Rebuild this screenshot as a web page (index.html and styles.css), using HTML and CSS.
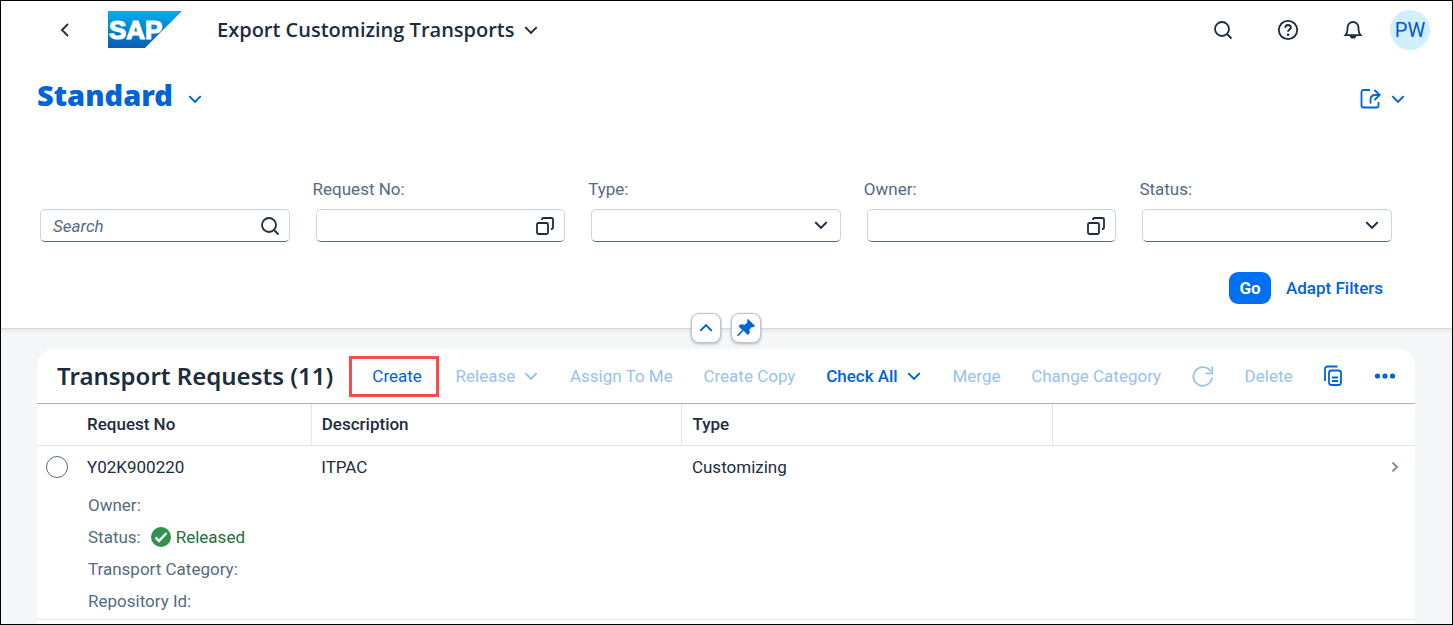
FILE: index.html
```html
<!DOCTYPE html>
<html lang="en">
<head>
<meta charset="utf-8">
<meta name="viewport" content="width=device-width, initial-scale=1">
<title>Export Customizing Transports</title>
<link rel="stylesheet" href="styles.css">
</head>
<body>
<svg width="0" height="0" class="defs" aria-hidden="true">
  <symbol id="down" viewBox="0 0 14 14"><path d="M2 4.500l5 5 5-5"/></symbol>
  <symbol id="search" viewBox="0 0 20 20"><circle cx="9" cy="9" r="7"/><path d="M14 14l4.500 4.500"/></symbol>
  <symbol id="valuehelp" viewBox="0 0 20 20"><rect x="2" y="7" width="11" height="11" rx="1.500"/><path d="M7 4V3.500A1.500 1.500 0 0 1 8.500 2H16.500A1.500 1.500 0 0 1 18 3.500V11.500A1.500 1.500 0 0 1 16.500 13H16"/></symbol>
</svg>

<header class="shell">
  <button class="icon-btn back" aria-label="Back"><svg class="icon" width="14" height="14" viewBox="0 0 14 14"><path d="M10 1L4 7l6 6"/></svg></button>
  <svg class="logo" width="74" height="38" viewBox="0 0 74 38" role="img" aria-label="SAP">
    <defs><linearGradient id="blue" x1="0" y1="0" x2="0" y2="1"><stop offset="0" stop-color="#00aeef"/><stop offset="1" stop-color="#0a5cb0"/></linearGradient></defs>
    <path d="M0 0H74L37 37H0Z" fill="url(#blue)"/>
    <text x="1" y="28" class="logo-text">SAP</text>
  </svg>
  <button class="app-title">Export Customizing Transports<svg class="icon" width="16" height="16"><use href="#down"/></svg></button>
  <div class="shell-actions">
    <button class="icon-btn" aria-label="Search"><svg class="icon" width="20" height="20"><use href="#search"/></svg></button>
    <button class="icon-btn" aria-label="Help"><svg class="icon" width="22" height="22" viewBox="0 0 22 22"><circle cx="11" cy="11" r="9.200"/><path d="M8.300 8.800C8.300 7 9.500 6 11.100 6s2.700 1 2.700 2.500c0 2-2.700 2.100-2.700 4.200" stroke-width="2"/><circle cx="11.100" cy="15.700" r="1.300" class="solid"/></svg></button>
    <button class="icon-btn" aria-label="Notifications"><svg class="icon" width="20" height="20" viewBox="0 0 20 20"><path d="M2.500 15.200C4.200 13.500 4.500 12 4.500 9V7.500a5.500 5.500 0 0 1 11 0V9c0 3 .300 4.500 2 6.200Z"/><path d="M6.500 16h7L12 18.500H8Z" class="solid"/></svg></button>
    <button class="avatar" aria-label="User PW">PW</button>
  </div>
</header>

<section class="page-header">
  <div class="title-row">
    <h1><button class="variant"><span>Standard</span><svg class="icon" width="16" height="16"><use href="#down"/></svg></button></h1>
    <button class="share" aria-label="Share"><svg class="icon" width="22" height="22" viewBox="0 0 22 22"><path d="M10 2H3.500a2 2 0 0 0-2 2V17.500a2 2 0 0 0 2 2H16.500a2 2 0 0 0 2-2V14"/><path d="M10.500 15.500V12Q10.500 7 15.500 7H19.500M14.500 2L19.700 7 14.500 12"/></svg><svg class="icon" width="16" height="16"><use href="#down"/></svg></button>
  </div>
  <form class="filters">
    <div class="field">
      <div class="control"><input type="text" id="q" placeholder="Search" aria-label="Search"><button type="button" class="inner" aria-label="Start search"><svg class="icon" width="20" height="20"><use href="#search"/></svg></button></div>
    </div>
    <div class="field">
      <label for="reqno">Request No:</label>
      <div class="control"><input type="text" id="reqno"><button type="button" class="inner" aria-label="Select request"><svg class="icon" width="20" height="20"><use href="#valuehelp"/></svg></button></div>
    </div>
    <div class="field">
      <label for="type">Type:</label>
      <div class="control"><select id="type"><option></option></select><svg class="icon arrow" width="16" height="16"><use href="#down"/></svg></div>
    </div>
    <div class="field">
      <label for="owner">Owner:</label>
      <div class="control"><input type="text" id="owner"><button type="button" class="inner" aria-label="Select owner"><svg class="icon" width="20" height="20"><use href="#valuehelp"/></svg></button></div>
    </div>
    <div class="field">
      <label for="status">Status:</label>
      <div class="control"><select id="status"><option></option></select><svg class="icon arrow" width="16" height="16"><use href="#down"/></svg></div>
    </div>
  </form>
  <div class="filter-actions">
    <button class="go">Go</button>
    <button class="adapt">Adapt Filters</button>
  </div>
  <div class="header-toggles">
    <button aria-label="Collapse header"><svg class="icon" width="16" height="16" viewBox="0 0 14 14"><path d="M2 9.500l5-5 5 5"/></svg></button>
    <button aria-label="Pin header"><svg width="20" height="20" viewBox="0 0 20 20"><path d="M12 1.200L18.800 8l-1.600 1-1.700-.100-2.300 2.600.300 3.500-1.700 1.800-4.200-4.200L2.300 18l-1-.800 5-5.300L2.800 8.200 4.500 6.600 8.700 7l2.800-2.600V2Z" fill="currentColor" stroke="currentColor" stroke-width=".5" stroke-linejoin="round"/></svg></button>
  </div>
</section>

<main class="content">
  <section class="card">
    <div class="toolbar">
      <h2>Transport Requests (11)</h2>
      <div class="tools">
        <button class="tool marked">Create</button>
        <button class="tool" disabled>Release<svg class="icon" width="16" height="16"><use href="#down"/></svg></button>
        <button class="tool" disabled>Assign To Me</button>
        <button class="tool" disabled>Create Copy</button>
        <button class="tool strong">Check All<svg class="icon" width="16" height="16"><use href="#down"/></svg></button>
        <button class="tool" disabled>Merge</button>
        <button class="tool" disabled>Change Category</button>
        <button class="tool" disabled aria-label="Refresh"><svg class="icon" width="22" height="22" viewBox="0 0 22 22"><path d="M20 12.500A9.300 9.300 0 1 1 18.600 6.500M20.300 1.500V8.300H13.500"/></svg></button>
        <button class="tool" disabled>Delete</button>
        <button class="tool" aria-label="Copy to clipboard"><svg class="icon" width="20" height="22" viewBox="0 0 20 22"><path d="M2 16V4a2.500 2.500 0 0 1 2.500-2.500H14.500"/><rect x="6" y="5.500" width="12" height="14.500" rx="2.500"/><path d="M9 12.500h6M9 16h6"/></svg></button>
        <button class="tool" aria-label="More"><svg width="22" height="6" viewBox="0 0 22 6" fill="currentColor"><circle cx="3.500" cy="3" r="2.600"/><circle cx="11" cy="3" r="2.600"/><circle cx="18.500" cy="3" r="2.600"/></svg></button>
      </div>
    </div>
    <table>
      <colgroup><col class="c-select"><col class="c-no"><col class="c-mid"><col class="c-mid"><col></colgroup>
      <thead><tr><td></td><th class="first" scope="col">Request No</th><th scope="col">Description</th><th scope="col">Type</th><td></td></tr></thead>
      <tbody>
        <tr>
          <td class="pick"><input type="radio" name="row" aria-label="Select Y02K900220"></td>
          <td>Y02K900220</td><td>ITPAC</td><td>Customizing</td>
          <td class="nav"><svg class="icon" width="12" height="12" viewBox="0 0 12 12"><path d="M3.500 1.500L8 6 3.500 10.500"/></svg></td>
        </tr>
        <tr class="details">
          <td></td>
          <td colspan="4"><ul>
            <li>Owner:</li>
            <li>Status:<span class="released"><svg width="20" height="20" viewBox="0 0 20 20"><circle cx="10" cy="10" r="10" fill="#30914c"/><path d="M4.500 10.500l3.500 3.500 7.500-8" fill="none" stroke="#fff" stroke-width="2.500"/></svg>Released</span></li>
            <li>Transport Category:</li>
            <li>Repository Id:</li>
          </ul></td>
        </tr>
      </tbody>
    </table>
  </section>
</main>
</body>
</html>
```
FILE: styles.css
```css
:root {
  --text: #1d2d3e;
  --label: #556b82;
  --blue: #0064d9;
  --body-font: Roboto, "Liberation Sans", sans-serif;
  --title-font: "Noto Sans", "Open Sans", sans-serif;
}

* { box-sizing: border-box; }

body {
  margin: 0;
  min-height: 100vh;
  display: flex;
  flex-direction: column;
  border: 1px solid #000;
  background: #f5f6f7;
  color: var(--text);
  font: 17px/20px var(--body-font);
}

button {
  display: flex;
  align-items: center;
  justify-content: center;
  padding: 0;
  border: 0;
  background: none;
  color: inherit;
  font: inherit;
  white-space: nowrap;
}

.defs { position: absolute; }

.icon {
  flex: none;
  fill: none;
  stroke: currentColor;
  stroke-width: 1.8;
}

.icon .solid { fill: currentColor; stroke: none; }

.shell {
  display: flex;
  align-items: center;
  height: 58px;
  padding: 0 22px 0 46px;
  background: #fff;
}

.icon-btn { width: 36px; height: 36px; }

.logo { margin-left: 25px; }

.logo-text {
  fill: #fff;
  stroke: #fff;
  stroke-width: 1.2;
  font: 700 26px "Liberation Sans", sans-serif;
}

.app-title {
  gap: 8px;
  margin-left: 35px;
  font: 600 20px/24px "Open Sans", sans-serif;
}

.shell-actions {
  display: flex;
  align-items: center;
  gap: 29px;
  margin-left: auto;
}

.avatar {
  width: 40px;
  height: 40px;
  margin-left: -10px;
  border-radius: 50%;
  background: #d1efff;
  color: #0057d2;
  font-size: 20px;
}

.page-header {
  position: relative;
  padding: 17px 37px 24px 36px;
  border-bottom: 1px solid #d5d8db;
  background: #fff;
  box-shadow: 0 2px 3px #e4e7ea;
}

.title-row {
  display: flex;
  align-items: center;
  justify-content: space-between;
  height: 46px;
  padding-right: 9px;
  color: var(--blue);
}

h1 { margin: 0; }

.variant {
  gap: 14px;
  font: 900 29px/36px var(--title-font);
}

.variant span { padding-bottom: 8px; }

.share { gap: 8px; }

.filters {
  display: grid;
  grid-template-columns: repeat(5, minmax(0, 1fr));
  gap: 23px;
  align-items: end;
  margin: 57px 23px 30px 0;
}

.field { padding-left: 3px; }

.field label {
  display: block;
  margin: 0 0 10px -3px;
  color: var(--label);
}

.control {
  position: relative;
  display: flex;
  height: 33px;
  margin-top: 1px;
  border: 1px solid #ccd4dc;
  border-bottom-color: #556b82;
  border-radius: 5px;
  background: #fff;
}

.control input,
.control select {
  flex: 1;
  min-width: 0;
  padding: 0 12px;
  border: 0;
  background: none;
  color: inherit;
  font: inherit;
  appearance: none;
}

.control input::placeholder {
  color: var(--label);
  font-style: italic;
  opacity: 1;
}

.inner { width: 38px; }

.arrow {
  position: absolute;
  top: 7px;
  right: 11px;
  pointer-events: none;
}

.filter-actions {
  display: flex;
  justify-content: flex-end;
  gap: 15px;
  padding-right: 32px;
}

.go {
  width: 42px;
  height: 32px;
  border-radius: 9px;
  background: #0070f2;
  color: #fff;
  font-weight: 700;
}

.adapt { color: var(--blue); font-weight: 500; }

.header-toggles {
  position: absolute;
  left: 0;
  right: 2px;
  bottom: -15px;
  display: flex;
  justify-content: center;
  gap: 10px;
}

.header-toggles button {
  width: 30px;
  height: 30px;
  border: 1px solid #bcc3ca;
  border-radius: 8px;
  background: #fff;
  box-shadow: 0 1px 3px #a9b4be;
  color: var(--blue);
}

.content {
  flex: 1;
  display: flex;
  padding: 20px 37px 0 36px;
}

.card {
  flex: 1;
  min-width: 0;
  border-radius: 16px 16px 0 0;
  background: #fff;
}

.toolbar {
  display: flex;
  align-items: center;
  height: 55px;
  padding: 0 5px 0 20px;
  border-bottom: 1px solid #a8b3bd;
}

h2 {
  margin: 0;
  font: 600 24px/32px var(--title-font);
  white-space: nowrap;
}

.tools {
  flex: 1;
  display: flex;
  align-items: center;
  justify-content: space-between;
  margin-left: 16px;
}

.tool {
  gap: 8px;
  height: 40px;
  padding: 0 14px;
  color: var(--blue);
}

.tool:disabled { color: #99c1f0; }
.strong { font-weight: 500; }

.marked {
  height: 41px;
  padding: 0 14px 0 20px;
  border: 3px solid #fa4b4b;
}

table {
  width: 100%;
  border-collapse: collapse;
  table-layout: fixed;
}

.c-select { width: 40px; }
.c-no { width: 17%; }
.c-mid { width: 26.9%; }

th, td {
  padding: 0 10px;
  text-align: left;
}

thead tr { height: 41px; border-bottom: 1px solid #e5e5e5; }
th { font-weight: 500; }
th + th, th + td { border-left: 1px solid #e5e5e5; }
tbody tr { height: 43px; }

.pick { padding: 0 0 0 9px; }

.pick input {
  display: block;
  width: 22px;
  height: 22px;
  margin: 0;
  border: 1px solid #556b82;
  border-radius: 50%;
  appearance: none;
}

.nav { color: #758ca4; }
.nav .icon { display: block; margin: 0 4px 0 auto; }

.details { border-bottom: 1px solid #e5e5e5; }

.details ul {
  margin: 0;
  padding: 1px 0 2px 1px;
  list-style: none;
  color: var(--label);
}

.details li {
  display: flex;
  align-items: center;
  gap: 10px;
  height: 32px;
}

.released {
  display: flex;
  align-items: center;
  gap: 5px;
  color: #256f3a;
}
```
